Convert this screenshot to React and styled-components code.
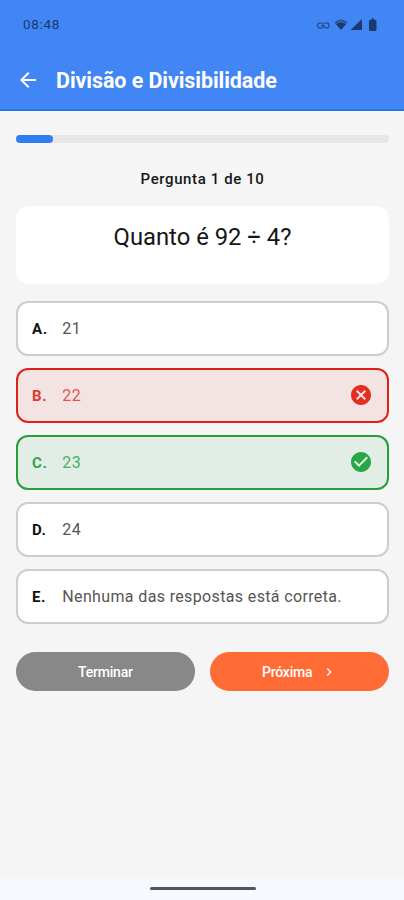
import styled, { createGlobalStyle, css } from 'styled-components'
import { MdArrowBack, MdCancel, MdCheckCircle, MdChevronRight } from 'react-icons/md'

const GlobalStyle = createGlobalStyle`
  * { box-sizing: border-box; }

  body {
    margin: 0;
    background: #f5f5f5;
    font-family: Roboto, 'Liberation Sans', sans-serif;
    color: #161616;
  }
`

const Screen = styled.div`
  width: 404px;
  height: 900px;
  display: flex;
  flex-direction: column;
  background: #f5f5f5;
  overflow: hidden;
`

const Header = styled.header`
  height: 111px;
  flex: none;
  background: #4285f5;
  border-bottom: 2px solid #2077e6;
`

const StatusBar = styled.div`
  height: 49px;
  padding: 0 26px 0 23px;
  display: flex;
  align-items: center;
  justify-content: space-between;
  color: #1d3a70;
`

const Clock = styled.span`
  padding-bottom: 1px;
  font-size: 13.5px;
  line-height: 16px;
  letter-spacing: 0.7px;
`

const TitleBar = styled.div`
  height: 62px;
  padding-left: 16px;
  display: flex;
  align-items: center;
  gap: 16px;
  color: #fff;
`

const Title = styled.h1`
  margin: 0;
  padding-top: 1px;
  font-size: 21.5px;
  line-height: 28px;
  font-weight: 700;
  letter-spacing: -0.08px;
  white-space: nowrap;
`

const Content = styled.main`
  flex: 1;
  display: flex;
  flex-direction: column;
  padding: 24px 15px 0 16px;
`

const Progress = styled.div`
  height: 8px;
  flex: none;
  border-radius: 4px;
  background: #e7e7e7;
`

const ProgressFill = styled.div`
  height: 100%;
  border-radius: 4px;
  background: #317ef0;
`

const Counter = styled.p`
  margin: 26px 0 17px;
  text-align: center;
  font-size: 15px;
  line-height: 20px;
  font-weight: 500;
  letter-spacing: 0.6px;
`

const QuestionCard = styled.section`
  height: 78px;
  padding-top: 16px;
  border-radius: 13px;
  background: #fff;
  text-align: center;
  font-size: 23.8px;
  line-height: 31px;
`

const Options = styled.div`
  margin-top: 17px;
  display: flex;
  flex-direction: column;
  gap: 12.6px;
`

const optionStates = {
  idle: css`
    border-color: #cdcdcd;
    background: #fff;
    color: #555;
  `,
  wrong: css`
    border-color: #de2119;
    background: #f3e4e3;
    color: #e5544c;
  `,
  right: css`
    border-color: #279d3c;
    background: #e2ede5;
    color: #4caf62;
  `,
}

const letterColors = { idle: '#111', wrong: '#e03a30', right: '#34a24c' }

const Option = styled.div`
  height: 54.5px;
  padding: 0 14px;
  display: flex;
  align-items: center;
  border: 2px solid;
  border-radius: 12px;
  ${props => optionStates[props.$state]}
`

const Letter = styled.span`
  width: 30.3px;
  padding-top: 1px;
  font-size: 15px;
  line-height: 20px;
  font-weight: 700;
  letter-spacing: 0.6px;
  color: ${props => letterColors[props.$state]};
`

const Answer = styled.span`
  flex: 1;
  padding-top: 1px;
  font-size: 16px;
  line-height: 20px;
  letter-spacing: 0.36px;
  white-space: nowrap;
`

const Mark = styled.span`
  display: flex;
  color: ${props => props.$state === 'right' ? '#28a745' : '#e52d20'};
`

const Buttons = styled.div`
  margin-top: 28px;
  display: flex;
  gap: 15.5px;
`

const Button = styled.button`
  flex: 1;
  height: 39px;
  padding: 1px 0 0;
  border: none;
  border-radius: 20px;
  display: flex;
  align-items: center;
  justify-content: center;
  gap: 9px;
  background: ${props => props.$primary ? '#ff6b35' : '#888'};
  color: #fff;
  font-family: inherit;
  font-size: 14px;
  font-weight: 500;
  letter-spacing: -0.2px;
`

const NavBar = styled.footer`
  height: 21px;
  flex: none;
  padding: 8px 0 0 1px;
  display: flex;
  justify-content: center;
  background: #f8f9fe;
`

const Handle = styled.div`
  width: 106px;
  height: 3px;
  border-radius: 2px;
  background: #55565a;
`

const options = [
  { letter: 'A.', text: '21', state: 'idle' },
  { letter: 'B.', text: '22', state: 'wrong' },
  { letter: 'C.', text: '23', state: 'right' },
  { letter: 'D.', text: '24', state: 'idle' },
  { letter: 'E.', text: 'Nenhuma das respostas está correta.', state: 'idle' },
]

const StatusIcons = () => (
  <svg width="62" height="14" viewBox="0 0 62 14" fill="currentColor">
    <path d="M7 6C5.500 4.500 1.500 4.500 1.500 7.500s4 3.500 5.500 1.300M5 7.500h2.500v2M7.500 6.500C9 4 13 4.500 13 7.500S9 10.500 8 8" fill="none" stroke="currentColor" strokeWidth="1.200" opacity="0.75" />
    <path d="M18.500 4.500Q25 -1.500 31.500 4.500L30.300 5.800Q25 1.300 19.700 5.800Z" opacity="0.7" />
    <path d="M19.800 6Q25 2.300 30.200 6L25 12Z" />
    <path d="M46 1v11H34.500Z" />
    <path d="M54 2h1.200V.5h3V2h1.300a1 1 0 0 1 1 1v9a1 1 0 0 1-1 1H54a1 1 0 0 1-1-1V3a1 1 0 0 1 1-1Z" />
  </svg>
)

const OptionRow = ({ letter, text, state }) => (
  <Option $state={state}>
    <Letter $state={state}>{letter}</Letter>
    <Answer>{text}</Answer>
    {state !== 'idle' && (
      <Mark $state={state}>
        {state === 'right' ? <MdCheckCircle size={24} /> : <MdCancel size={24} />}
      </Mark>
    )}
  </Option>
)

export default function App() {
  const current = 1
  const total = 10

  return (
    <>
      <GlobalStyle />
      <Screen>
        <Header>
          <StatusBar>
            <Clock>08:48</Clock>
            <StatusIcons />
          </StatusBar>
          <TitleBar>
            <MdArrowBack size={24} />
            <Title>Divisão e Divisibilidade</Title>
          </TitleBar>
        </Header>
        <Content>
          <Progress>
            <ProgressFill style={{ width: `${(current / total) * 100}%` }} />
          </Progress>
          <Counter>Pergunta {current} de {total}</Counter>
          <QuestionCard>Quanto é 92 ÷ 4?</QuestionCard>
          <Options>
            {options.map(option => <OptionRow key={option.letter} {...option} />)}
          </Options>
          <Buttons>
            <Button>Terminar</Button>
            <Button $primary>
              Próxima
              <MdChevronRight size={16} />
            </Button>
          </Buttons>
        </Content>
        <NavBar>
          <Handle />
        </NavBar>
      </Screen>
    </>
  )
}
